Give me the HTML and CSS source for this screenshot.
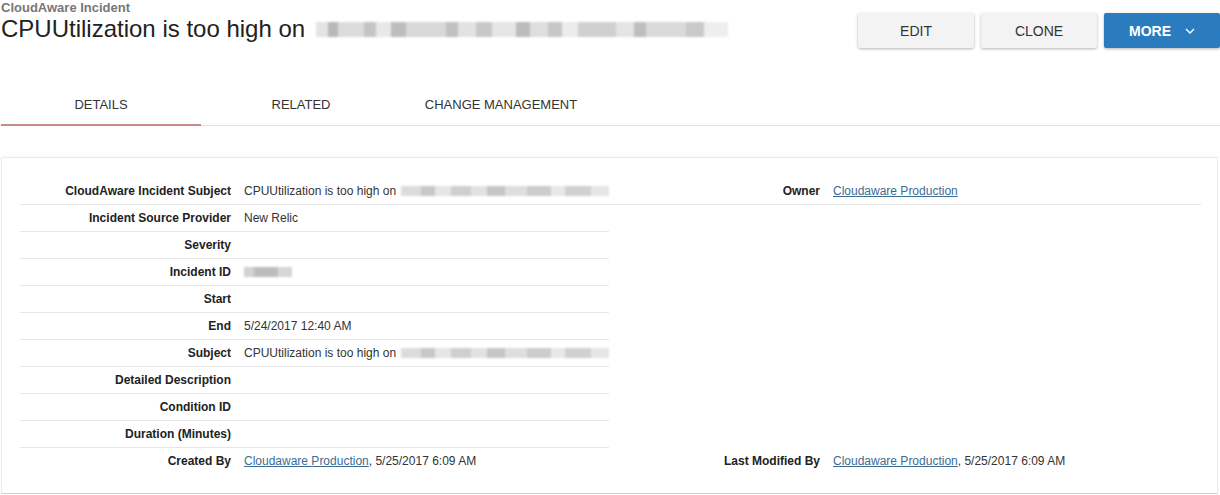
FILE: index.html
```html
<!DOCTYPE html>
<html lang="en">
<head>
    <meta charset="UTF-8">
    <meta name="viewport" content="width=device-width, initial-scale=1.0">
    <title>CloudAware Incident</title>
    <link rel="stylesheet" href="styles.css">
</head>
<body>
    <div class="page-header">
        <div class="heading">
            <div class="object-type">CloudAware Incident</div>
            <h1 class="record-title">CPUUtilization is too high on <span class="redacted redacted-title"></span></h1>
        </div>
        <div class="actions">
            <button class="btn">EDIT</button>
            <button class="btn">CLONE</button>
            <button class="btn btn-primary">MORE
                <svg class="chevron" width="10" height="6" viewBox="0 0 10 6"><polyline points="1,1 5,5 9,1" fill="none" stroke="#fff" stroke-width="1.4"/></svg>
            </button>
        </div>
    </div>

    <div class="tabs">
        <div class="tab active">DETAILS</div>
        <div class="tab">RELATED</div>
        <div class="tab">CHANGE MANAGEMENT</div>
    </div>

    <div class="panel">
        <div class="fields">
            <div class="field">
                <div class="label">CloudAware Incident Subject</div>
                <div class="value">CPUUtilization is too high on <span class="redacted redacted-long"></span></div>
            </div>
            <div class="field">
                <div class="label">Owner</div>
                <div class="value"><a href="#">Cloudaware Production</a></div>
            </div>

            <div class="field">
                <div class="label">Incident Source Provider</div>
                <div class="value">New Relic</div>
            </div>
            <div class="field empty"></div>

            <div class="field">
                <div class="label">Severity</div>
                <div class="value"></div>
            </div>
            <div class="field empty"></div>

            <div class="field">
                <div class="label">Incident ID</div>
                <div class="value"><span class="redacted redacted-short"></span></div>
            </div>
            <div class="field empty"></div>

            <div class="field">
                <div class="label">Start</div>
                <div class="value"></div>
            </div>
            <div class="field empty"></div>

            <div class="field">
                <div class="label">End</div>
                <div class="value">5/24/2017 12:40 AM</div>
            </div>
            <div class="field empty"></div>

            <div class="field">
                <div class="label">Subject</div>
                <div class="value">CPUUtilization is too high on <span class="redacted redacted-long"></span></div>
            </div>
            <div class="field empty"></div>

            <div class="field">
                <div class="label">Detailed Description</div>
                <div class="value"></div>
            </div>
            <div class="field empty"></div>

            <div class="field">
                <div class="label">Condition ID</div>
                <div class="value"></div>
            </div>
            <div class="field empty"></div>

            <div class="field">
                <div class="label">Duration (Minutes)</div>
                <div class="value"></div>
            </div>
            <div class="field empty"></div>

            <div class="field last">
                <div class="label">Created By</div>
                <div class="value"><a href="#">Cloudaware Production</a>, 5/25/2017 6:09 AM</div>
            </div>
            <div class="field last">
                <div class="label">Last Modified By</div>
                <div class="value"><a href="#">Cloudaware Production</a>, 5/25/2017 6:09 AM</div>
            </div>
        </div>
    </div>
</body>
</html>
```

FILE: styles.css
```css
body {
    margin: 0;
    font-family: "Liberation Sans", Arial, sans-serif;
    color: #333;
    background-color: #fff;
}

.page-header {
    display: flex;
    justify-content: space-between;
    align-items: flex-start;
    padding-left: 1px;
}
.object-type {
    font-size: 13px;
    line-height: 15px;
    font-weight: bold;
    color: #777;
}
.record-title {
    margin: 0;
    font-size: 24px;
    line-height: 28px;
    font-weight: normal;
    color: #222;
}

/* blurred-out hostnames */
.redacted {
    display: inline-block;
    vertical-align: middle;
    filter: blur(1px);
}
.redacted-title {
    width: 412px;
    height: 15px;
    margin-left: 4px;
    margin-top: -3px;
    background: linear-gradient(90deg, #e4e4e4 0 12px, #b9b9b9 12px 22px, #dcdcdc 22px 48px, #c4c4c4 48px 60px, #e8e8e8 60px 75px, #bdbdbd 75px 90px, #d8d8d8 90px 130px, #c0c0c0 130px 142px, #e2e2e2 142px 160px, #c8c8c8 160px 176px, #e6e6e6 176px 200px, #bcbcbc 200px 214px, #dedede 214px 232px, #c6c6c6 232px 246px, #ececec 246px 262px, #d0d0d0 262px 300px, #e4e4e4 300px 318px, #bebebe 318px 330px, #dadada 330px 370px, #c9c9c9 370px 388px, #eeeeee 388px 412px);
}
.redacted-long {
    width: 208px;
    height: 10px;
    margin-left: 2px;
    margin-top: -2px;
    background: linear-gradient(90deg, #dcdcdc 0 20px, #c8c8c8 20px 34px, #e6e6e6 34px 50px, #cfcfcf 50px 70px, #e2e2e2 70px 86px, #c6c6c6 86px 104px, #dedede 104px 126px, #cccccc 126px 150px, #e8e8e8 150px 164px, #d0d0d0 164px 190px, #e6e6e6 190px 208px);
}
.redacted-short {
    width: 48px;
    height: 10px;
    margin-top: -2px;
    background: linear-gradient(90deg, #d2d2d2 0 10px, #bdbdbd 10px 34px, #d6d6d6 34px 48px);
}

.actions {
    display: flex;
    gap: 7px;
    margin-top: 13px;
}
.btn {
    display: flex;
    align-items: center;
    justify-content: center;
    gap: 14px;
    width: 116px;
    height: 35px;
    padding: 0;
    border: none;
    border-radius: 2px;
    background-color: #f3f3f3;
    box-shadow: 0 1px 3px rgba(0,0,0,0.3);
    font-family: inherit;
    font-size: 14px;
    color: #333;
    cursor: pointer;
}
.btn-primary {
    background-color: #2b7cbf;
    color: #fff;
    font-weight: bold;
}

.tabs {
    display: flex;
    margin-top: 33px;
    border-bottom: 1px solid #e0e0e0;
}
.tab {
    width: 200px;
    height: 27px;
    padding-top: 16px;
    line-height: 15px;
    text-align: center;
    font-size: 13px;
    color: #333;
    border-bottom: 2px solid transparent;
    margin-bottom: -1px;
}
.tab:first-child {
    margin-left: 1px;
}
.tab.active {
    border-bottom-color: #c98a8d;
}

.panel {
    margin: 31px 2px 0 1px;
    padding: 20px 16px 18px 18px;
    border: 1px solid #ececec;
    border-bottom-color: #cfcfcf;
    box-shadow: 0 -1px 2px rgba(0,0,0,0.04);
}
.fields {
    display: grid;
    grid-template-columns: 589px 1fr;
}
.field {
    display: grid;
    grid-template-columns: 211px 1fr;
    column-gap: 13px;
    height: 26px;
    line-height: 26px;
    font-size: 12px;
    border-bottom: 1px solid #e6e6e6;
}
.field.empty,
.field.last {
    border-bottom-color: transparent;
}
.label {
    text-align: right;
    font-weight: bold;
    color: #222;
}
.value {
    color: #333;
    white-space: nowrap;
}
.value a {
    color: #3b6c96;
}
```
